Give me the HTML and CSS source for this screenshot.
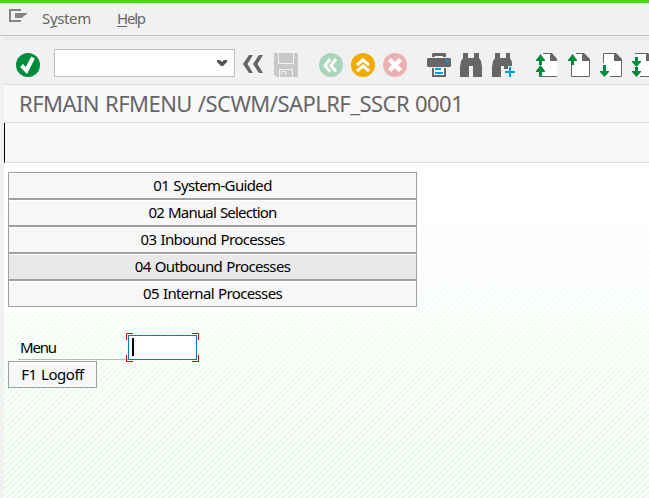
FILE: index.html
```html
<!DOCTYPE html>
<html lang="en">
<head>
<meta charset="utf-8">
<title>RFMAIN RFMENU</title>
<link rel="stylesheet" href="styles.css">
</head>
<body>
<div class="window">
  <nav class="menubar">
    <svg class="menu-icon" width="18" height="14" viewBox="0 0 18 14"><path d="M12 1H1v11h11" fill="none" stroke="#858585" stroke-width="2"/><path d="M6 4h12v1l-3 2-2 2H6z" fill="#858585"/></svg>
    <span class="menu-system">S<u>y</u>stem</span>
    <span class="menu-help"><u>H</u>elp</span>
  </nav>
  <div class="toolbar">
    <svg class="icon" viewBox="0 0 24 24"><circle cx="12" cy="12" r="12" fill="#008a3b"/><path d="M5.500 12.500l5 5 6.500-13" fill="none" stroke="#fff" stroke-width="4"/></svg>
    <div class="command"><svg width="10" height="6" viewBox="0 0 10 6"><path d="M0 0h3l2 2 2-2h3v2L6 6H4L0 2z" fill="#555"/></svg></div>
    <svg class="icon back" viewBox="0 0 24 24"><path d="M8 2h4L6.500 11l5.500 9H8L2 11zM18 2h4l-5.500 9 5.500 9h-4l-6-9z" fill="#666"/></svg>
    <svg class="icon save" viewBox="0 0 24 24" shape-rendering="crispEdges"><path d="M0 0h4v11h16V0h4v24h-5v-8H5v8H2l-2-2z" fill="#c9c9c9"/><path d="M5 0h14v10H5z" fill="#c9c9c9"/><path d="M6 17h12v7H6zM7 18v4h5v-4z" fill="#c9c9c9" fill-rule="evenodd"/><path d="M8 19h3v3H8z" fill="#c9c9c9"/></svg>
    <svg class="icon nav-back" viewBox="0 0 24 24"><circle cx="12" cy="12" r="12" fill="#a9d5bd"/><path d="M11 6l-5 6.500 5 6M17 6l-5 6.500 5 6" fill="none" stroke="#fff" stroke-width="3"/></svg>
    <svg class="icon next" viewBox="0 0 24 24"><circle cx="12" cy="12" r="12" fill="#f2ab00"/><path d="M6 12l6-5 6 5M6 18l6-5 6 5" fill="none" stroke="#fff" stroke-width="3"/></svg>
    <svg class="icon next" viewBox="0 0 24 24"><circle cx="12" cy="12" r="12" fill="#ebb1b1"/><path d="M6.500 6.500l11 11M17.500 6.500l-11 11" stroke="#fff" stroke-width="4.500"/></svg>
    <svg class="icon print" viewBox="0 0 24 24"><path d="M6 0h12l1 1v3h-3V3H8v1H5V1zM1 5h22l1 1v7l-1 1H1l-1-1V6z" fill="#666"/><path d="M6 15v8h12v-8" fill="#fff" stroke="#666" stroke-width="2"/><path d="M8 16h6M8 20h8" stroke="#009de0" stroke-width="2"/><path d="M18 7h4v2h-4z" fill="#009de0"/></svg>
    <svg class="icon next" viewBox="0 0 24 24"><path d="M4 0h5v5h6V0h5v5l2 3 1 6v10h-9V13h-4v11H1V14l1-6 2-3z" fill="#666"/></svg>
    <svg class="icon next" viewBox="0 0 24 24"><path d="M4 0h5v5h6V0h4v5l2 4v4h-4v3h-4v-3h-3v11H1V14l1-6 2-3z" fill="#666"/><path d="M19 14v10M14 19h10" stroke="#009de0" stroke-width="2"/></svg>
    <svg class="icon page" viewBox="0 0 24 24"><path d="M8 1h8l6 6v16H7V1z" fill="#fff"/><path d="M8 0h7v1H8zM4 23h18v1H4z" fill="#666"/><path d="M15 0h2l5 6v2h-7z" fill="#666"/><path d="M5.500 1l4.500 6v1H7v4H4V8H1V7zM5.500 12l4.500 6v1H7v4H4v-4H1v-1z" fill="#008a3b"/></svg>
    <svg class="icon next" viewBox="0 0 24 24"><path d="M9 1h6l7 6v16H4V12h4z" fill="#fff"/><path d="M9 .5h6M4.500 12v11.500h18V7" fill="none" stroke="#666"/><path d="M15 0h2l6 6v2h-8z" fill="#666"/><path d="M5.500 1l4.500 6v1H7v4H4V8H1V7z" fill="#008a3b"/></svg>
    <svg class="icon next" viewBox="0 0 24 24"><path d="M5 1h11l6 6v16H9v-9H5z" fill="#fff"/><path d="M4.500 10V.5H16M22.500 7v16.500H11" fill="none" stroke="#666"/><path d="M15 0h2l6 6v2h-8z" fill="#666"/><path d="M4 12h3v6h3v1l-4.500 5L1 19v-1h3z" fill="#008a3b"/></svg>
    <svg class="icon next" viewBox="0 0 24 24"><path d="M5 1h11l6 6v16H7V2z" fill="#fff"/><path d="M4 .5h12M9 23.500h13V7" fill="none" stroke="#666"/><path d="M15 0h2l6 6v2h-8z" fill="#666"/><path d="M4 4h3v4h3v1l-4.500 5L1 9V8h3zM4 14h3v4h3v1l-4.500 5L1 19v-1h3z" fill="#008a3b"/></svg>
  </div>
  <h1 class="title">RFMAIN RFMENU /SCWM/SAPLRF_SSCR 0001</h1>
  <div class="appbar"></div>
  <main class="screen">
    <button class="item"><span>01 System-Guided</span></button>
    <button class="item b2"><span>02 Manual Selection</span></button>
    <button class="item"><span>03 Inbound Processes</span></button>
    <button class="item active"><span>04 Outbound Processes</span></button>
    <button class="item"><span>05 Internal Processes</span></button>
    <div class="field">
      <label class="label">Menu</label>
      <div class="entry"><i class="caret"></i>
        <svg class="corners" width="73" height="29" viewBox="0 0 73 29"><path d="M.5 7V.5H7M66 .5h6.500V7M.5 22v6.500H7M66 28.500h6.500V22" fill="none" stroke="#d90000"/></svg>
      </div>
    </div>
    <button class="item logoff"><span>F1 Logoff</span></button>
  </main>
</div>
</body>
</html>
```
FILE: styles.css
```css
* { box-sizing: border-box; }
body { margin: 0; background: #f1f1f1; font-family: "Noto Sans", "DejaVu Sans", sans-serif; overflow: hidden; }
.window { width: 649px; height: 498px; border-top: 3px solid #3be100; overflow: hidden; }
.menubar { height: 33px; display: flex; align-items: flex-start; padding-left: 9px; border-bottom: 1px solid #c3c3c3; color: #666; font-size: 15px; line-height: 20px; }
.menu-icon { margin-top: 6px; }
.menubar span { margin-top: 5px; white-space: nowrap; }
.menubar u { text-underline-offset: 2px; text-decoration-thickness: 1px; }
.menu-system { width: 75px; margin-left: 15px; letter-spacing: -0.35px; }
.menu-help { letter-spacing: -1.2px; }
.toolbar { height: 49px; margin-left: 4px; display: flex; align-items: flex-start; padding: 13px 0 0 12px; border-top: 4px solid #ebebeb; border-bottom: 1px solid #dcdcdc; }
.toolbar .icon { width: 24px; height: 24px; flex: none; overflow: visible; }
.command { width: 181px; height: 28px; flex: none; margin: -4px 0 0 14px; background: #fff; border: 1px solid #bfbfbf; display: flex; align-items: center; justify-content: flex-end; padding-right: 7px; }
.toolbar .back { margin-left: 6px; }
.toolbar .save { margin-left: 9px; }
.toolbar .nav-back { margin-left: 21px; }
.toolbar .next { margin-left: 8px; }
.toolbar .print, .toolbar .page { margin-left: 20px; }
.title { height: 38px; margin: 0 0 0 4px; padding-left: 15px; background: #f9f9f9; border-bottom: 1px solid #dcdcdc; color: #666; font-size: 22px; font-weight: 400; letter-spacing: -0.54px; word-spacing: 0.8px; line-height: 36px; white-space: nowrap; }
.appbar { height: 40px; margin-left: 4px; background: #f9f9f9; border-bottom: 1px solid #dcdcdc; border-left: 1px solid #000; }
.screen { height: 335px; margin-left: 4px; padding: 9px 0 0 4px; background: linear-gradient(#fff 0, #fff 30px, transparent 335px), repeating-linear-gradient(135deg, #e6f9e6 0, #e6f9e6 2.12px, #fcfffc 2.12px, #fcfffc 4.243px); }
.item { display: flex; align-items: flex-start; justify-content: center; width: 409px; height: 27px; padding: 2px 0 0; border: 1px solid #a0a0a0; border-radius: 0; background: #f7f7f7; box-shadow: inset 0 1px #fff; color: #000; font: 15px/20px "Noto Sans", "DejaVu Sans", sans-serif; letter-spacing: -0.64px; word-spacing: 0.9px; white-space: nowrap; }
.b2 { letter-spacing: -0.82px; }
.active { background: #e9e9e9; }
.field { display: flex; height: 25px; margin: 28px 0 1px 10px; }
.label { width: 110px; padding-left: 2px; border-bottom: 1px solid #b7b7b7; font-size: 15px; letter-spacing: -1.2px; line-height: 25px; }
.entry { position: relative; width: 69px; height: 25px; border: 1px solid #007cc0; background: #fff; }
.corners { position: absolute; left: -3px; top: -3px; }
.caret { display: block; width: 2px; height: 18px; margin: 2px 0 0 3px; background: #000; }
.logoff { width: 89px; letter-spacing: -0.45px; }
```
